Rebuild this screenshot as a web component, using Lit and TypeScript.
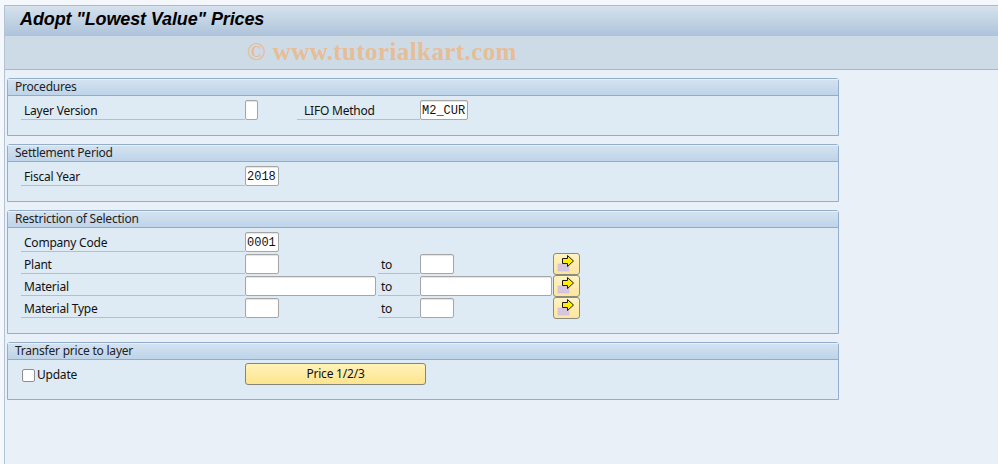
import { LitElement, html, css } from "lit";
import { customElement } from "lit/decorators.js";

const arrow = html`<svg width="25" height="20" viewBox="0 0 25 20">
  <rect x="4" y="10" width="11" height="7" fill="#d6c6e0" stroke="#c8bcd6" stroke-width="0.5"></rect>
  <path d="M8.5 4.5H13.5V1.5L19.5 7L13.5 12.5V9.5H8.5Z" fill="#ffee00" stroke="#1a1a1a" stroke-width="1"></path>
</svg>`;

@customElement("app-root")
export class AppRoot extends LitElement {
  static styles = css`
    :host {
      display: block;
      width: 998px;
      height: 464px;
      overflow: hidden;
      background: #f4f7fb;
      font-family: "Noto Sans", "Open Sans", sans-serif;
      font-size: 12px;
      letter-spacing: -0.22px;
      color: #111;
    }
    .shell {
      margin: 5px 0 0 4px;
      height: 459px;
      background: #e9f0f7;
      border-left: 1px solid #b4c3d2;
      border-top: 1px solid #a9bccf;
      box-sizing: border-box;
      display: flex;
      flex-direction: column;
    }
    .title {
      height: 30px;
      box-sizing: border-box;
      background: linear-gradient(#d6e2ed, #adc3da);
      padding: 0 0 3px 15px;
      display: flex;
      align-items: center;
      font: italic bold 18px "Liberation Sans", sans-serif;
      letter-spacing: -0.12px;
      color: #000;
    }
    .toolbar {
      height: 34px;
      box-sizing: border-box;
      background: #cddbe7;
      border-bottom: 1px solid #a7bacb;
      padding: 0 0 2px 242px;
      display: flex;
      align-items: center;
    }
    .mark {
      font: bold 25px "Liberation Serif", serif;
      color: #e7bd96;
      letter-spacing: 0.4px;
      white-space: nowrap;
    }
    .content {
      padding: 8px 0 0 2px;
      display: flex;
      flex-direction: column;
      gap: 8px;
    }
    .group {
      width: 832px;
      box-sizing: border-box;
      border: 1px solid #92aecb;
      border-top-left-radius: 3px;
      border-top-right-radius: 3px;
      background: #deeaf4;
    }
    .head {
      height: 17px;
      box-sizing: border-box;
      padding-left: 7px;
      background: linear-gradient(#d3e2f0, #bed4e9);
      border-top: 1px solid #e6f0f8;
      border-bottom: 1px solid #8facc9;
      line-height: 13px;
      color: #222;
    }
    .body {
      display: flex;
      flex-direction: column;
      padding: 4px 0 0 13px;
      box-sizing: border-box;
    }
    .g1 .body, .g2 .body { height: 39px; }
    .g3 .body { height: 105px; }
    .g4 .body { height: 39px; padding-top: 3px; }
    .row {
      display: flex;
      height: 22px;
      align-items: flex-start;
    }
    .label {
      height: 20px;
      box-sizing: border-box;
      border-bottom: 1px solid #b7bec4;
      padding: 3px 0 0 3px;
      line-height: 16px;
      white-space: nowrap;
      flex: none;
    }
    .main { width: 224px; }
    .lifo { width: 123px; padding-left: 7px; margin-left: 39px; }
    .to { width: 42px; }
    .to.near { margin-left: 2px; }
    .input {
      height: 20px;
      box-sizing: border-box;
      flex: none;
      background: #fff;
      border: 1px solid #a6a6a6;
      border-radius: 2px;
      box-shadow: inset 0 1px 1px #e4e4e8;
      font: 12px/20px "Liberation Mono", monospace;
      letter-spacing: 0;
      color: #111;
      padding-left: 1px;
    }
    .w13 { width: 13px; }
    .w34 { width: 34px; }
    .w48 { width: 48px; }
    .w131 { width: 131px; }
    .w132 { width: 132px; }
    .gap-99 { width: 99px; flex: none; }
    .gap-1 { width: 1px; flex: none; }
    .btn-i {
      flex: none;
      width: 27px;
      height: 22px;
      margin-top: -1px;
      box-sizing: border-box;
      border: 1px solid #8b8b80;
      border-radius: 3px;
      background: linear-gradient(#fff3c4, #fde59c);
      display: block;
      padding: 0;
    }
    .btn-i svg { display: block; }
    .check-row { display: flex; align-items: flex-start; height: 22px; padding-left: 1px; }
    .check {
      width: 13px;
      height: 13px;
      margin-top: 6px;
      box-sizing: border-box;
      border: 1px solid #8f8f8f;
      border-radius: 2px;
      background: #fff;
      flex: none;
    }
    .check-text { width: 210px; flex: none; padding: 4px 0 0 2px; box-sizing: border-box; line-height: 16px; }
    .btn {
      width: 181px;
      height: 22px;
      box-sizing: border-box;
      border: 1px solid #85857a;
      border-radius: 3px;
      background: linear-gradient(#fff3b8, #fde48e);
      text-align: center;
      line-height: 20px;
      color: #111;
    }
  `;

  render() {
    return html`<div class="shell">
      <div class="title">Adopt "Lowest Value" Prices</div>
      <div class="toolbar"><span class="mark">© www.tutorialkart.com</span></div>
      <div class="content">
        <section class="group g1">
          <div class="head">Procedures</div>
          <div class="body">
            <div class="row">
              <div class="label main">Layer Version</div>
              <div class="input w13"></div>
              <div class="label lifo">LIFO Method</div>
              <div class="input w48">M2_CUR</div>
            </div>
          </div>
        </section>
        <section class="group g2">
          <div class="head">Settlement Period</div>
          <div class="body">
            <div class="row">
              <div class="label main">Fiscal Year</div>
              <div class="input w34">2018</div>
            </div>
          </div>
        </section>
        <section class="group g3">
          <div class="head">Restriction of Selection</div>
          <div class="body">
            <div class="row">
              <div class="label main">Company Code</div>
              <div class="input w34">0001</div>
            </div>
            <div class="row">
              <div class="label main">Plant</div>
              <div class="input w34"></div>
              <div class="gap-99"></div>
              <div class="label to">to</div>
              <div class="input w34"></div>
              <div class="gap-99"></div>
              <button class="btn-i">${arrow}</button>
            </div>
            <div class="row">
              <div class="label main">Material</div>
              <div class="input w131"></div>
              <div class="label to near">to</div>
              <div class="input w132"></div>
              <div class="gap-1"></div>
              <button class="btn-i">${arrow}</button>
            </div>
            <div class="row">
              <div class="label main">Material Type</div>
              <div class="input w34"></div>
              <div class="gap-99"></div>
              <div class="label to">to</div>
              <div class="input w34"></div>
              <div class="gap-99"></div>
              <button class="btn-i">${arrow}</button>
            </div>
          </div>
        </section>
        <section class="group g4">
          <div class="head">Transfer price to layer</div>
          <div class="body">
            <div class="check-row">
              <div class="check"></div>
              <div class="check-text">Update</div>
              <div class="btn">Price 1/2/3</div>
            </div>
          </div>
        </section>
      </div>
    </div>`;
  }
}
